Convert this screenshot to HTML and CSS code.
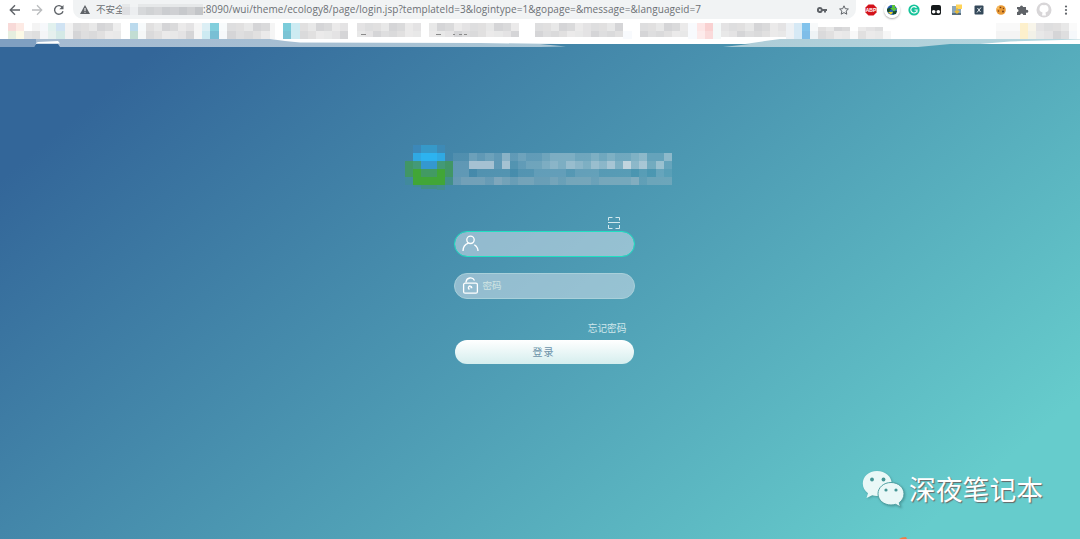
FILE: index.html
```html
<!DOCTYPE html>
<html lang="zh-CN">
<head>
<meta charset="utf-8">
<title>登录</title>
<link rel="stylesheet" href="styles.css">
</head>
<body>
<header class="chrome">
  <div class="toolbar">
    <nav class="nav">
      <svg width="12" height="12" viewBox="0 0 12 12" fill="none" stroke="#5f6368" stroke-width="1.4"><path d="M11 6H1.5M6 1.3L1.3 6L6 10.700"/></svg>
      <svg width="12" height="12" viewBox="0 0 12 12" fill="none" stroke="#babcbe" stroke-width="1.3"><path d="M1 6h9.500M6 1.300L10.700 6L6 10.700"/></svg>
      <svg width="12" height="12" viewBox="0 0 12 12"><path d="M9.500 3.600A4.300 4.300 0 1 0 10 7.200" fill="none" stroke="#5f6368" stroke-width="1.400"/><path d="M10.500 1v4.200H6.300z" fill="#5f6368"/></svg>
    </nav>
    <div class="omnibox">
      <svg class="warn" width="10" height="9" viewBox="0 0 10 9"><path d="M5 0L10 9H0z" fill="#5f6368"/><path d="M5 3v3M5 6.800v1" stroke="#fff"/></svg>
      <span class="insecure">不安全</span>
      <svg class="mosaic host" id="host" width="82" height="19"></svg>
      <span class="url">:8090/wui/theme/ecology8/page/login.jsp?templateId=3&amp;logintype=1&amp;gopage=&amp;message=&amp;languageid=7</span>
      <svg class="key" width="10" height="6" viewBox="0 0 10 6"><path d="M3 0a3 3 0 1 0 2.700 4H7v1.500h2V4h1V2H5.700A3 3 0 0 0 3 0z" fill="#5f6368"/><circle cx="2.900" cy="3" r="1" fill="#f1f3f4"/></svg>
      <svg class="star" width="10" height="10" viewBox="0 0 10 10"><path d="M5 .8L6.300 3.700L9.400 4L7.100 6.100L7.800 9.200L5 7.600L2.200 9.200L2.900 6.100L.6 4L3.700 3.700z" fill="none" stroke="#5f6368"/></svg>
    </div>
    <div class="extensions">
      <svg viewBox="0 0 16 16"><path d="M5.500 2.500h5l3 3v5l-3 3h-5l-3-3v-5z" fill="#d3121b"/><text x="8" y="10" class="abp">ABP</text></svg>
      <svg viewBox="0 0 16 16" class="raised"><circle cx="8" cy="8" r="8" fill="#fff"/><circle cx="8" cy="8" r="5" fill="#2a62b3"/><path d="M3 7l4-2 1 2-2 1-1 3-2-2zM9 9h4l-1 3-3 .500z" fill="#184b2d"/><path d="M8 3h3v3h2.500L10 9.500 6 6H8z" fill="#5bc43b"/><path d="M4 10h5l-2 2.800z" fill="#eed321"/></svg>
      <svg viewBox="0 0 16 16"><circle cx="8" cy="8" r="5.600" fill="#15c39a"/><path d="M10.500 5.800A3.200 3.200 0 1 0 11.200 8H8.500M11 8v2.500" fill="none" stroke="#fff" stroke-width="1.100"/></svg>
      <svg viewBox="0 0 16 16"><rect x="3" y="3" width="10" height="10" rx="2" fill="#15191b"/><circle cx="5.700" cy="9.800" r="1.800" fill="#fff"/><circle cx="10.300" cy="9.800" r="1.800" fill="#fff"/></svg>
      <svg viewBox="0 0 16 16"><rect x="3" y="4" width="9" height="9" fill="#8ba6bb"/><path d="M3 11h9v2H3z" fill="#596f7e"/><path d="M7 2.500h6V7H7z" fill="#ffd45a"/><path d="M8 6v5M6 9l2 2 2-2" stroke="#e9ba36" stroke-width="1.500" fill="none"/></svg>
      <svg viewBox="0 0 16 16"><rect x="3.500" y="3.500" width="9" height="9" rx="1" fill="#34495a"/><path d="M6.500 6l3 4M10 5.500l-4 5" stroke="#e7edf0" stroke-width="1"/></svg>
      <svg viewBox="0 0 16 16"><circle cx="8" cy="8" r="4.800" fill="#e99a35"/><path d="M3.300 7a4.800 4.800 0 0 1 3-3.600L6 7z" fill="#f6bb60"/><g fill="#764019"><circle cx="7.500" cy="5.500" r=".8"/><circle cx="5.500" cy="9" r=".8"/><circle cx="10" cy="9.500" r="1"/><circle cx="10.500" cy="6.500" r=".7"/></g></svg>
      <svg viewBox="0 0 16 16"><path d="M3 5h3a1.500 1.500 0 1 1 3 0h3v3a1.500 1.500 0 1 1 0 2.500V13H9.200a1.500 1.500 0 0 0-3 0H3v-3a1.500 1.500 0 0 0 0-3z" fill="#5f6368"/></svg>
      <svg viewBox="0 0 16 16"><circle cx="8" cy="8" r="7.500" fill="#d8d6d8"/><path d="M6 13.500l.5-3A3.700 3.700 0 0 1 8 3.200a3.700 3.700 0 0 1 1.500 7.300l.5 3z" fill="#fff"/></svg>
      <svg viewBox="0 0 16 16"><g fill="#5f6368"><circle cx="8" cy="4.500" r="1.100"/><circle cx="8" cy="8" r="1.100"/><circle cx="8" cy="11.700" r="1.100"/></g></svg>
    </div>
  </div>
  <svg class="mosaic bookmarks" id="bookmarks" width="1080" height="17"></svg>
</header>

<main class="page">
  <svg class="torn" width="1080" height="8" viewBox="0 0 1080 8">
    <defs><linearGradient id="band"><stop offset="0" stop-color="#a5bad1"/><stop offset=".3" stop-color="#a6bfd3"/><stop offset=".7" stop-color="#aecdd8"/><stop offset="1" stop-color="#b5d7df"/></linearGradient></defs>
    <path d="M0 0H1080V5H950L918 8H723L750 5H540L566 7.500L540 8H60L58 5H36L34 8H0z" fill="url(#band)"/>
    <path d="M0 0H36V5L34 8H0z" fill="#7698bd" opacity=".8"/>
    <path d="M36 4L38 3L58 2L60 4.500H36zM270 0Q285 2 300 3.500L480 4L560 5H745L765 2L780 0zM1080 0V5H980L1010 2.500L1080 .5z" fill="#fff"/>
  </svg>

  <div class="brand">
    <svg class="mosaic" id="logo" width="268" height="48" viewBox="0 0 268 48"></svg>
  </div>

  <form class="login">
    <svg class="scan" width="12" height="12" viewBox="0 0 12 12" fill="none" stroke="#d3e9ee"><path d="M.5 3.500v-3h4M7.500 .5h4v3M.5 8v3.500h4M7.500 11.500h4V8M0 5.500h12"/></svg>
    <label class="field focused">
      <svg width="17" height="17" viewBox="0 0 17 17" fill="none" stroke="#fff" stroke-width="1.300"><circle cx="8.500" cy="4.800" r="3.700"/><path d="M1 16C1 11.800 3.200 9.300 6.500 8.200M12.300 9.800C15 11.500 16 13.500 16 16"/></svg>
    </label>
    <label class="field">
      <svg width="17" height="17" viewBox="0 0 17 17" fill="none" stroke="#fff" stroke-width="1.300"><rect x="1.600" y="6.200" width="13.800" height="10" rx="1.500"/><path d="M4 5.500V4.800A4.500 4.500 0 0 1 12.500 3.500M7.500 12.300a1.700 1.700 0 1 1 2.300-1.600H8.500"/></svg>
      <span class="hint">密码</span>
    </label>
    <a class="forgot">忘记密码</a>
    <button class="submit" type="button">登录</button>
  </form>

  <div class="watermark">
    <svg width="43" height="38" viewBox="0 0 43 38">
      <g fill="#e9f8f7">
        <path d="M15 1C6.500 1 .8 6.700.8 13.500c0 4 2 7.500 5.200 9.700L4.500 28l5.700-2.800c1.500.5 3.100.7 4.800.7 8.500 0 14.700-5.600 14.700-12.400S23.500 1 15 1z"/>
        <path d="M29 12.500c-7.300 0-13 5-13 11.300S21.700 35 29 35c1.600 0 3.200-.3 4.600-.7l4.900 2.600-1.300-4.200c3-2.100 4.800-5.300 4.800-8.900 0-6.300-5.700-11.300-13-11.300z" stroke="#4fa0a2"/>
      </g>
      <g fill="#459595"><circle cx="10" cy="9.500" r="1.900"/><circle cx="21.500" cy="9.500" r="1.900"/><circle cx="24" cy="20" r="1.600"/><circle cx="34" cy="20" r="1.600"/></g>
    </svg>
    <span class="watermark-text">深夜笔记本</span>
  </div>
  <svg class="spark" width="8" height="2" viewBox="0 0 8 2"><path d="M0 2L3 .5L7 0L8 2z" fill="#ef7b43"/></svg>
</main>
<script src="mosaic.js"></script>
</body>
</html>
```

FILE: styles.css
```css
* { box-sizing: border-box; }

body {
  margin: 0;
  width: 1080px;
  height: 539px;
  overflow: hidden;
  display: flex;
  flex-direction: column;
  background: #fff;
  font-family: "Open Sans", "Noto Sans CJK SC", sans-serif;
}

svg { display: block; flex: none; }
.mosaic { shape-rendering: crispEdges; }

.chrome { height: 39px; flex: none; }
.toolbar { display: flex; height: 19px; align-items: center; padding-left: 9px; }
.nav { display: flex; gap: 10px; width: 64px; }

.omnibox {
  display: flex;
  align-items: center;
  width: 783px;
  height: 19px;
  padding: 0 7px 0 7px;
  background: #f1f3f4;
  border-radius: 0 0 10px 10px;
  color: #6c7074;
}
.insecure { width: 26px; margin-left: 6px; font-size: 9.5px; line-height: 19px; white-space: nowrap; }
.host { width: 81px; }
.url { flex: 1; font-size: 10px; letter-spacing: .065px; line-height: 19px; white-space: nowrap; }
.key { margin-right: 12px; }

.extensions { display: flex; gap: 5.700px; margin-left: 6.500px; }
.extensions svg { width: 16px; height: 16px; }
.raised { border-radius: 50%; box-shadow: 0 1px 2px #0005; }
.abp { font: bold 5px "Liberation Sans", sans-serif; fill: #fff; text-anchor: middle; }
.bookmarks { margin-top: 4px; }

.page {
  position: relative;
  flex: 1;
  display: flex;
  flex-direction: column;
  align-items: center;
  background: linear-gradient(140deg, #336699 10%, #66cccc 90%);
}
.torn { position: absolute; left: 0; top: 0; }
.brand { margin-top: 105px; padding-right: 2px; }

.login { display: flex; flex-direction: column; width: 181px; margin: 25px 0 0 8px; }
.scan { align-self: flex-end; margin: 0 15px 2px 0; }
.field {
  display: flex;
  align-items: center;
  height: 26px;
  margin-bottom: 16px;
  padding-left: 7px;
  border: 1px solid #a9d0da;
  border-radius: 13px;
  background: rgba(222, 230, 240, .5);
}
.focused { border-color: #20dfc2; background-clip: padding-box; }
.field svg { margin-top: -1px; }
.hint { margin: -3px 0 0 4px; font-size: 9.5px; color: #d1e5e3; }
.forgot { align-self: flex-end; margin: 6px 8px 0 0; font-size: 9.700px; line-height: 15px; color: #d0e8ec; }
.submit {
  width: 179px;
  height: 24px;
  margin: 4px 0 0 1px;
  padding: 0 1px 0 0;
  border: 0;
  border-radius: 12px;
  background: linear-gradient(#fff, #d5eeee);
  color: #6b92a9;
  font: 10px/24px "Noto Sans CJK SC", sans-serif;
  letter-spacing: 1px;
}

.watermark { position: absolute; left: 862px; top: 431px; display: flex; align-items: center; gap: 4px; }
.watermark svg { filter: drop-shadow(1px 1px 1px #387e7e99); }
.watermark-text {
  font: 26.800px/38px "Noto Sans CJK SC", sans-serif;
  color: #fff;
  text-shadow: 1px 1px 1px #666;
  white-space: nowrap;
}
.spark { position: absolute; left: 899px; bottom: 0; }
```

FILE: mosaic.js
```javascript
function cell(id, x, y, w, h, fill, opacity) {
  const r = document.createElementNS("http://www.w3.org/2000/svg", "rect");
  const attrs = { x, y, width: w, height: h, fill, opacity: opacity === undefined ? 1 : opacity };
  for (const k in attrs) r.setAttribute(k, attrs[k]);
  document.getElementById(id).appendChild(r);
}

// Bookmark cells: start x, end x, upper colour, lower colour ("g" = mixed greys)
const shades = ["#e4e3e4", "#dadadb", "#e8e8e8", "#dededf", "#ebeaea", "#d5d5d7", "#e1e0e0"];
[
  [8, 16, "#f8dad8", "#e6eedf"], [16, 24, "#fdeae4", "#fcf9e6"], [24, 32, "#ffffff", "#e3e3e3"],
  [32, 40, "#f4f4f4", "#dfdfdf"], [40, 48, "#f6f8fb", "#f4f5f7"], [48, 56, "#e1f1ee", "#e6f0ee"],
  [56, 65, "#d0e3f3", "#d4e9e6"], [65, 73, "#f2f2f2", "#f1f1f1"], [73, 113, "g"],
  [113, 121, "#eeeeee", "#e9e9e9"], [130, 138, "#bbdaed", "#c2ddd3"], [138, 146, "#f7fafb", "#f5f7f7"],
  [146, 194, "g"], [194, 202, "#f5f5f5", "#f5f5f5"], [202, 210, "#dceff5", "#cdeaf2"],
  [210, 219, "#82cfdd", "#79bfd4"], [219, 227, "#f8fbfc", "#f6f8fa"], [227, 270, "g"],
  [270, 275, "#f5f5f5", "#f5f5f5"], [283, 291, "#7bccda", "#7bc4d5"], [291, 300, "#cdebf2", "#cdebf2"],
  [300, 348, "g"], [357, 421, "g"], [429, 519, "g"], [535, 623, "g"],
  [623, 632, "#ffffff", "#f8fafd"], [640, 688, "g"], [688, 697, "#f8fafd", "#f8fafd"],
  [697, 705, "#fde6e6", "#fdebeb"], [705, 713, "#f9d1d1", "#fadada"], [713, 721, "#f4f8f8", "#f4f8f8"],
  [721, 786, "g"], [786, 794, "#eef1f4", "#eef1f4"], [794, 802, "#d6e9f5", "#d6e9f5"],
  [802, 810, "#82c3ec", "#7fbde8"], [810, 818, "#f7f9fa", "#eef3f5"], [818, 850, "g"],
  [850, 858, "#ffffff", "#f8f8f8"], [858, 883, "g"], [883, 891, "#ffffff", "#f6f6f6"],
  [996, 1020, "#f9f9f9", "#f4f4f4"], [1020, 1028, "#fdf0cc", "#fdf0cc"], [1028, 1036, "#f8f5ea", "#f2f1e8"],
  [1036, 1069, "g"], [1069, 1077, "#fafafa", "#f6f8fb"]
].forEach(([a, b, top, bottom]) => {
  if (top !== "g") {
    cell("bookmarks", a, 0, b - a, 8, top);
    cell("bookmarks", a, 8, b - a, 8, bottom);
    return;
  }
  const n = Math.round((b - a) / 8.1), w = (b - a) / n;
  const bottomRow = a > 330 && a < 750 ? 5.5 : 8;
  const first = a > 815 && a < 900 ? 4 : 0;
  for (let i = 0; i < n; i++) {
    cell("bookmarks", a + i * w, first, w, 8 - first, shades[(a + i * 3) % 7]);
    cell("bookmarks", a + i * w, 8, w, bottomRow, shades[(a + i * 5 + 2) % 7]);
  }
});

// Remains of bookmark labels under the blocks
[[361, 5], [436, 5], [453, 2], [459, 3], [464, 3]].forEach(([x, w]) => cell("bookmarks", x, 11, w, 1, "#8a8a8a"));

// Host name
["#dedfe2", "#eceef0", "#d6d8da", "#d0d2d4", "#d5d6d8", "#cbcdd0", "#cfd0d3", "#c7c9cc", "#cfd0d2", "#c3c5c8"].forEach((c, i) => {
  const x = i < 2 ? i * 8 : 16 + (i - 2) * 8.1;
  cell("host", x, 7, 8.1, 8, c);
  if (i !== 1) cell("host", x, 4, 8.1, 3, "#e6e8e9");
});

// Emblem
[
  [8, 0, 8, 8, "#3c88b9"], [16, 0, 16, 8, "#3699c9"], [32, 0, 8, 8, "#3d8ab6"],
  [8, 8, 8, 8, "#30a9e3"], [16, 8, 16, 8, "#2cb3f0"], [32, 8, 8, 8, "#30a9e3"],
  [0, 16, 8, 16, "#419666"], [40, 16, 8, 16, "#419666"],
  [8, 16, 8, 8, "#439978"], [16, 16, 16, 8, "#3498cf"], [32, 16, 8, 8, "#439978"],
  [8, 24, 8, 8, "#41a637"], [16, 24, 16, 8, "#429a63"], [32, 24, 8, 8, "#41a637"],
  [0, 32, 8, 8, "#418a9c"], [8, 32, 32, 8, "#41a637"], [40, 32, 8, 8, "#428f88"],
  [8, 40, 8, 2, "#418b98"], [16, 40, 16, 4, "#428e86"], [32, 40, 8, 5, "#428e90"]
].forEach(([x, y, w, h, c]) => cell("logo", x, y ? y + 1 : 0.5, w, h, c));

// Company name: white strength per block
[
  "113232523223444334343345225",
  "227772712334546546574957362",
  "220111101122221222111101021",
  "344435434433434443444452333"
].forEach((row, j) => {
  [...row].forEach((v, i) => cell("logo", 48 + i * 8.1, 9 + j * 8, 8.1, 8, j === 3 ? "#d5cfd4" : "#f0eef0", v * 0.08));
});
```
